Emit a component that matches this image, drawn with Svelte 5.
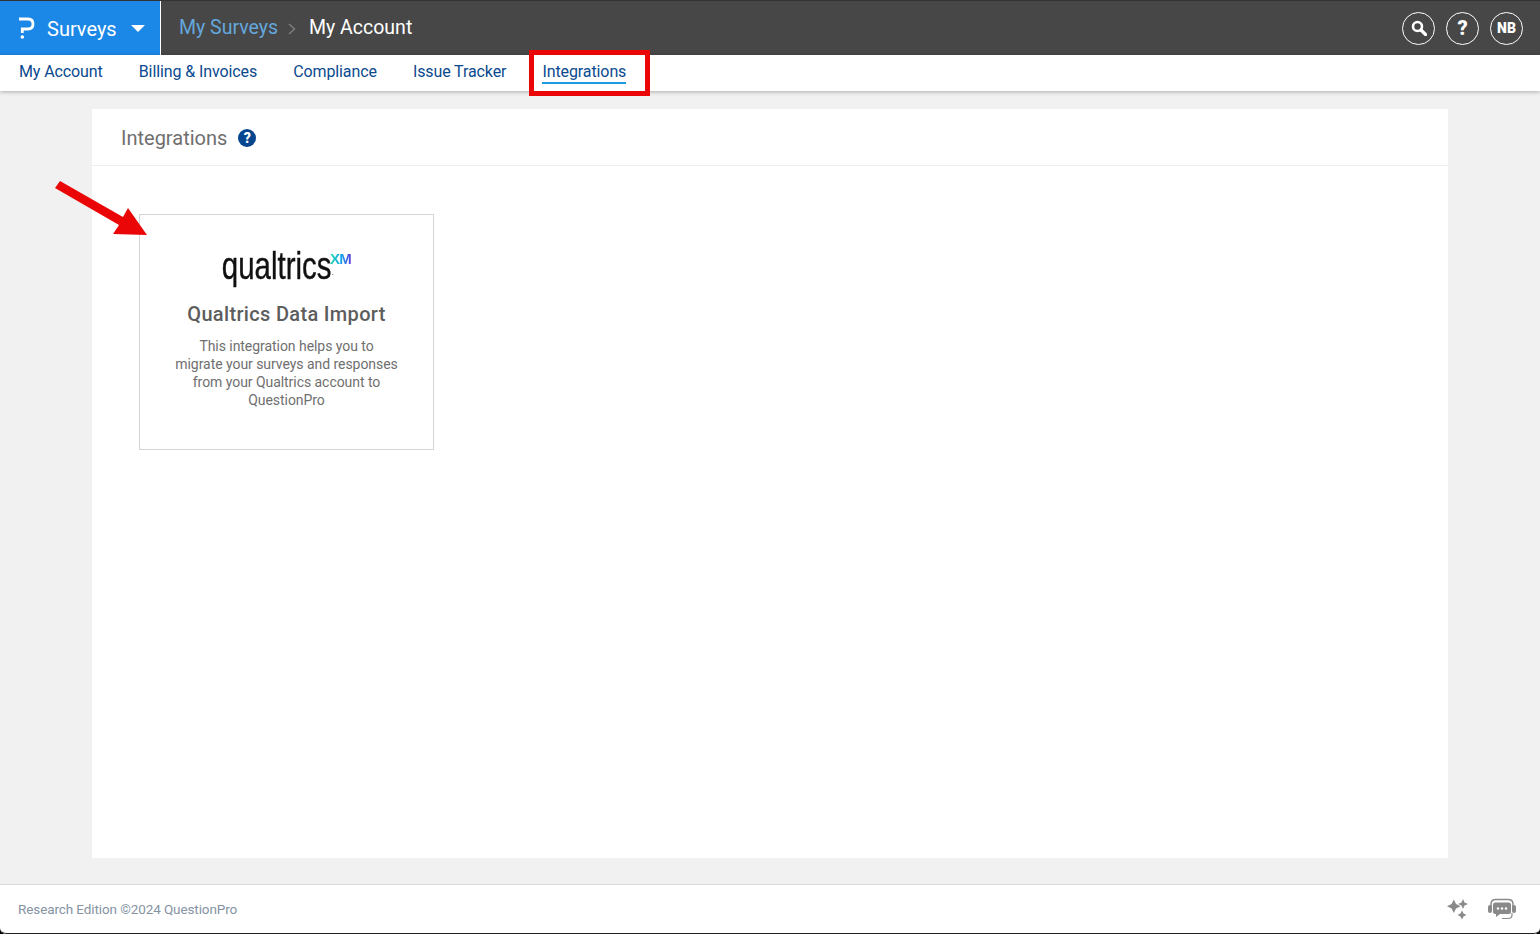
<script lang="ts">
    const tabs = ["My Account", "Billing & Invoices", "Compliance", "Issue Tracker", "Integrations"];
    const activeTab = "Integrations";
</script>

<div class="page">
    <header class="topbar">
        <div class="product">
            <svg class="logo" width="16" height="22" viewBox="0 0 16 22" fill="none">
                <path d="M0 2H9C12.500 2 14 4 14 7C14 10 12.500 12 9 12H3.300V16" stroke="#fff" stroke-width="2.800" />
                <circle cx="3.300" cy="20" r="1.800" fill="#fff" />
            </svg>
            <span class="product-name">Surveys</span>
            <span class="caret"></span>
        </div>
        <nav class="crumbs">
            <span class="crumb-link">My Surveys</span>
            <svg class="crumb-sep" width="8" height="12" viewBox="0 0 8 12" fill="none">
                <path d="M1 1L6.500 6L1 11" stroke="#7d7d7d" stroke-width="1.500" />
            </svg>
            <span class="crumb-current">My Account</span>
        </nav>
        <div class="actions">
            <span class="round">
                <svg width="16" height="16" viewBox="0 0 16 16" fill="none">
                    <circle cx="6.500" cy="6.500" r="4.500" stroke="#fff" stroke-width="2.600" />
                    <path d="M10 10L14.500 14.500" stroke="#fff" stroke-width="3.200" stroke-linecap="round" />
                </svg>
            </span>
            <span class="round qmark">?</span>
            <span class="round initials">NB</span>
        </div>
    </header>

    <nav class="tabs">
        {#each tabs as tab}
            <span class="tab" class:active={tab === activeTab}>{tab}</span>
        {/each}
    </nav>

    <main class="content">
        <section class="panel">
            <div class="panel-head">
                <h1>Integrations</h1>
                <span class="help">?</span>
            </div>
            <div class="panel-body">
                <article class="card">
                    <div class="brand">
                        <span class="brand-word">qualtrics</span><span class="brand-dot">.</span><span class="brand-xm">XM</span>
                    </div>
                    <h2>Qualtrics Data Import</h2>
                    <p>This integration helps you to<br />migrate your surveys and responses<br />from your Qualtrics account to<br />QuestionPro</p>
                </article>
            </div>
        </section>
    </main>

    <footer class="footer">
        <span class="copyright">Research Edition ©2024 QuestionPro</span>
        <div class="footer-icons">
            <svg width="22" height="22" viewBox="0 0 22 22" fill="#8a8a8a">
                <path d="M8 4L10.600 9.400L16 12L10.600 14.600L8 20L5.400 14.600L0 12L5.400 9.400Z" transform="translate(0 -2) scale(.85)" />
                <path d="M16 1L17.500 4.500L21 6L17.500 7.500L16 11L14.500 7.500L11 6L14.500 4.500Z" />
                <path d="M15 14L16.500 17L19.500 18.500L16.500 20L15 23L13.500 20L10.500 18.500L13.500 17Z" transform="translate(0 -1.500)" />
            </svg>
            <svg width="30" height="22" viewBox="0 0 30 22" fill="none">
                <path d="M4 9V6C4 3 6 1.500 9 1.500H21C24 1.500 26 3 26 6V9" stroke="#8a8a8a" stroke-width="1.500" />
                <rect x="1" y="7" width="4" height="8" rx="2" fill="#8a8a8a" />
                <rect x="25" y="7" width="4" height="8" rx="2" fill="#8a8a8a" />
                <path d="M8 4.500H22C23 4.500 24 5.500 24 6.500V14C24 15 23 16 22 16H13L9 19V16H8C7 16 6 15 6 14V6.500C6 5.500 7 4.500 8 4.500Z" fill="#8a8a8a" />
                <circle cx="11" cy="10.500" r="1.200" fill="#fff" />
                <circle cx="15" cy="10.500" r="1.200" fill="#fff" />
                <circle cx="19" cy="10.500" r="1.200" fill="#fff" />
                <path d="M25 15V17C25 19 23.500 20.500 21 20.500H15" stroke="#8a8a8a" stroke-width="1.200" />
            </svg>
        </div>
    </footer>

    <!-- annotations drawn on top of the screenshot -->
    <div class="mark-box"></div>
    <svg class="mark-arrow" width="100" height="60" viewBox="0 0 100 60">
        <polygon points="1,8 6,1 69,37 74,28 93,55 59,54 65,45" fill="#ea0606" />
    </svg>
</div>

<style>
    :global(body) {
        margin: 0;
        background: #000;
    }

    .page {
        position: relative;
        display: flex;
        flex-direction: column;
        height: 934px;
        overflow: hidden;
        background: #f1f1f1;
        font-family: Roboto, "Noto Sans", sans-serif;
        border-radius: 0 0 6px 6px;
    }

    .topbar {
        display: flex;
        align-items: stretch;
        height: 54px;
        flex: none;
        border-top: 1px solid #333;
        background: #474747;
    }

    .product {
        display: flex;
        align-items: center;
        width: 161px;
        box-sizing: border-box;
        padding-left: 19px;
        background: #1b87e6;
        border-right: 1px solid #fff;
        color: #fff;
    }

    .logo {
        margin-top: -1px;
    }

    .product-name {
        margin-left: 12px;
        margin-top: 2px;
        font-size: 20px;
    }

    .caret {
        margin-left: 14px;
        border-left: 7px solid transparent;
        border-right: 7px solid transparent;
        border-top: 7px solid #fff;
    }

    .crumbs {
        display: flex;
        align-items: center;
        padding-left: 18px;
        padding-bottom: 1px;
        font-size: 19.500px;
    }

    .crumb-link {
        color: #64a7dc;
    }

    .crumb-sep {
        margin: 3px 13px 0 10px;
    }

    .crumb-current {
        color: #fff;
    }

    .actions {
        display: flex;
        align-items: center;
        gap: 11px;
        margin-left: auto;
        padding-right: 17px;
    }

    .round {
        display: flex;
        align-items: center;
        justify-content: center;
        width: 31px;
        height: 31px;
        border: 1px solid #fff;
        border-radius: 50%;
        color: #fff;
        font-weight: 700;
    }

    .qmark {
        font-size: 20px;
        font-weight: 900;
    }

    .initials {
        font-size: 14px;
        font-weight: 900;
    }

    .tabs {
        position: relative;
        display: flex;
        gap: 36px;
        align-items: center;
        flex: none;
        height: 36px;
        padding-left: 19px;
        background: #fff;
        box-shadow: 0 1px 4px rgba(0, 0, 0, 0.28);
        font-size: 16px;
        letter-spacing: -0.1px;
        color: #0b4a8f;
    }

    .tab {
        padding-bottom: 1px;
        border-bottom: 2px solid transparent;
    }

    .tab.active {
        border-bottom-color: #1b9ae0;
    }

    .content {
        flex: 1;
        padding: 18px 92px 26px;
        min-height: 0;
    }

    .panel {
        height: 100%;
        background: #fff;
    }

    .panel-head {
        display: flex;
        align-items: center;
        gap: 11px;
        height: 57px;
        box-sizing: border-box;
        padding: 2px 0 0 29px;
        border-bottom: 1px solid #ececec;
    }

    h1 {
        margin: 0;
        font-size: 20px;
        font-weight: 400;
        color: #6f6f6f;
    }

    .help {
        display: flex;
        align-items: center;
        justify-content: center;
        width: 18px;
        height: 18px;
        border-radius: 50%;
        background: #05468f;
        color: #fff;
        font-size: 14px;
        font-weight: 900;
    }

    .panel-body {
        padding: 48px 47px;
    }

    .card {
        box-sizing: border-box;
        width: 295px;
        height: 236px;
        padding: 30px 28px 0;
        border: 1px solid #d4d4d4;
        text-align: center;
    }

    .brand {
        display: flex;
        justify-content: center;
        align-items: flex-start;
        height: 56px;
        color: #111;
        font-family: "Liberation Sans", sans-serif;
    }

    .brand-word {
        display: inline-block;
        margin: 0 -18px;
        font-size: 39px;
        line-height: 42px;
        transform: scaleX(0.755);
        -webkit-text-stroke: 0.4px #111;
    }

    .brand-dot {
        font-size: 9px;
        line-height: 55px;
        color: #666;
    }

    .brand-xm {
        margin: 7px 0 0 -4px;
        font-size: 15px;
        font-weight: 700;
        line-height: 14px;
        letter-spacing: -0.8px;
        background: linear-gradient(90deg, #21dbaa, #0fa7e8 50%, #5a3ee0);
        -webkit-background-clip: text;
        background-clip: text;
        color: transparent;
    }

    h2 {
        margin: 0;
        font-size: 20px;
        line-height: 26px;
        font-weight: 500;
        letter-spacing: 0.33px;
        white-space: nowrap;
        color: #5d5d5d;
    }

    p {
        margin: 10px 0 0;
        font-size: 14px;
        line-height: 18px;
        letter-spacing: -0.05px;
        color: #6f6f6f;
    }

    .footer {
        display: flex;
        align-items: center;
        justify-content: space-between;
        flex: none;
        height: 48px;
        padding: 0 23px 0 18px;
        border-top: 1px solid #d9d9d9;
        background: #fff;
        border-bottom: 1px solid #222;
        border-radius: 0 0 6px 6px;
    }

    .copyright {
        font-size: 13.500px;
        letter-spacing: -0.1px;
        color: #8593a3;
    }

    .footer-icons {
        display: flex;
        align-items: center;
        gap: 18px;
    }

    .mark-box {
        position: absolute;
        left: 529px;
        top: 50px;
        width: 121px;
        height: 46px;
        box-sizing: border-box;
        border: 5px solid #ea0606;
    }

    .mark-arrow {
        position: absolute;
        left: 54px;
        top: 180px;
    }
</style>
